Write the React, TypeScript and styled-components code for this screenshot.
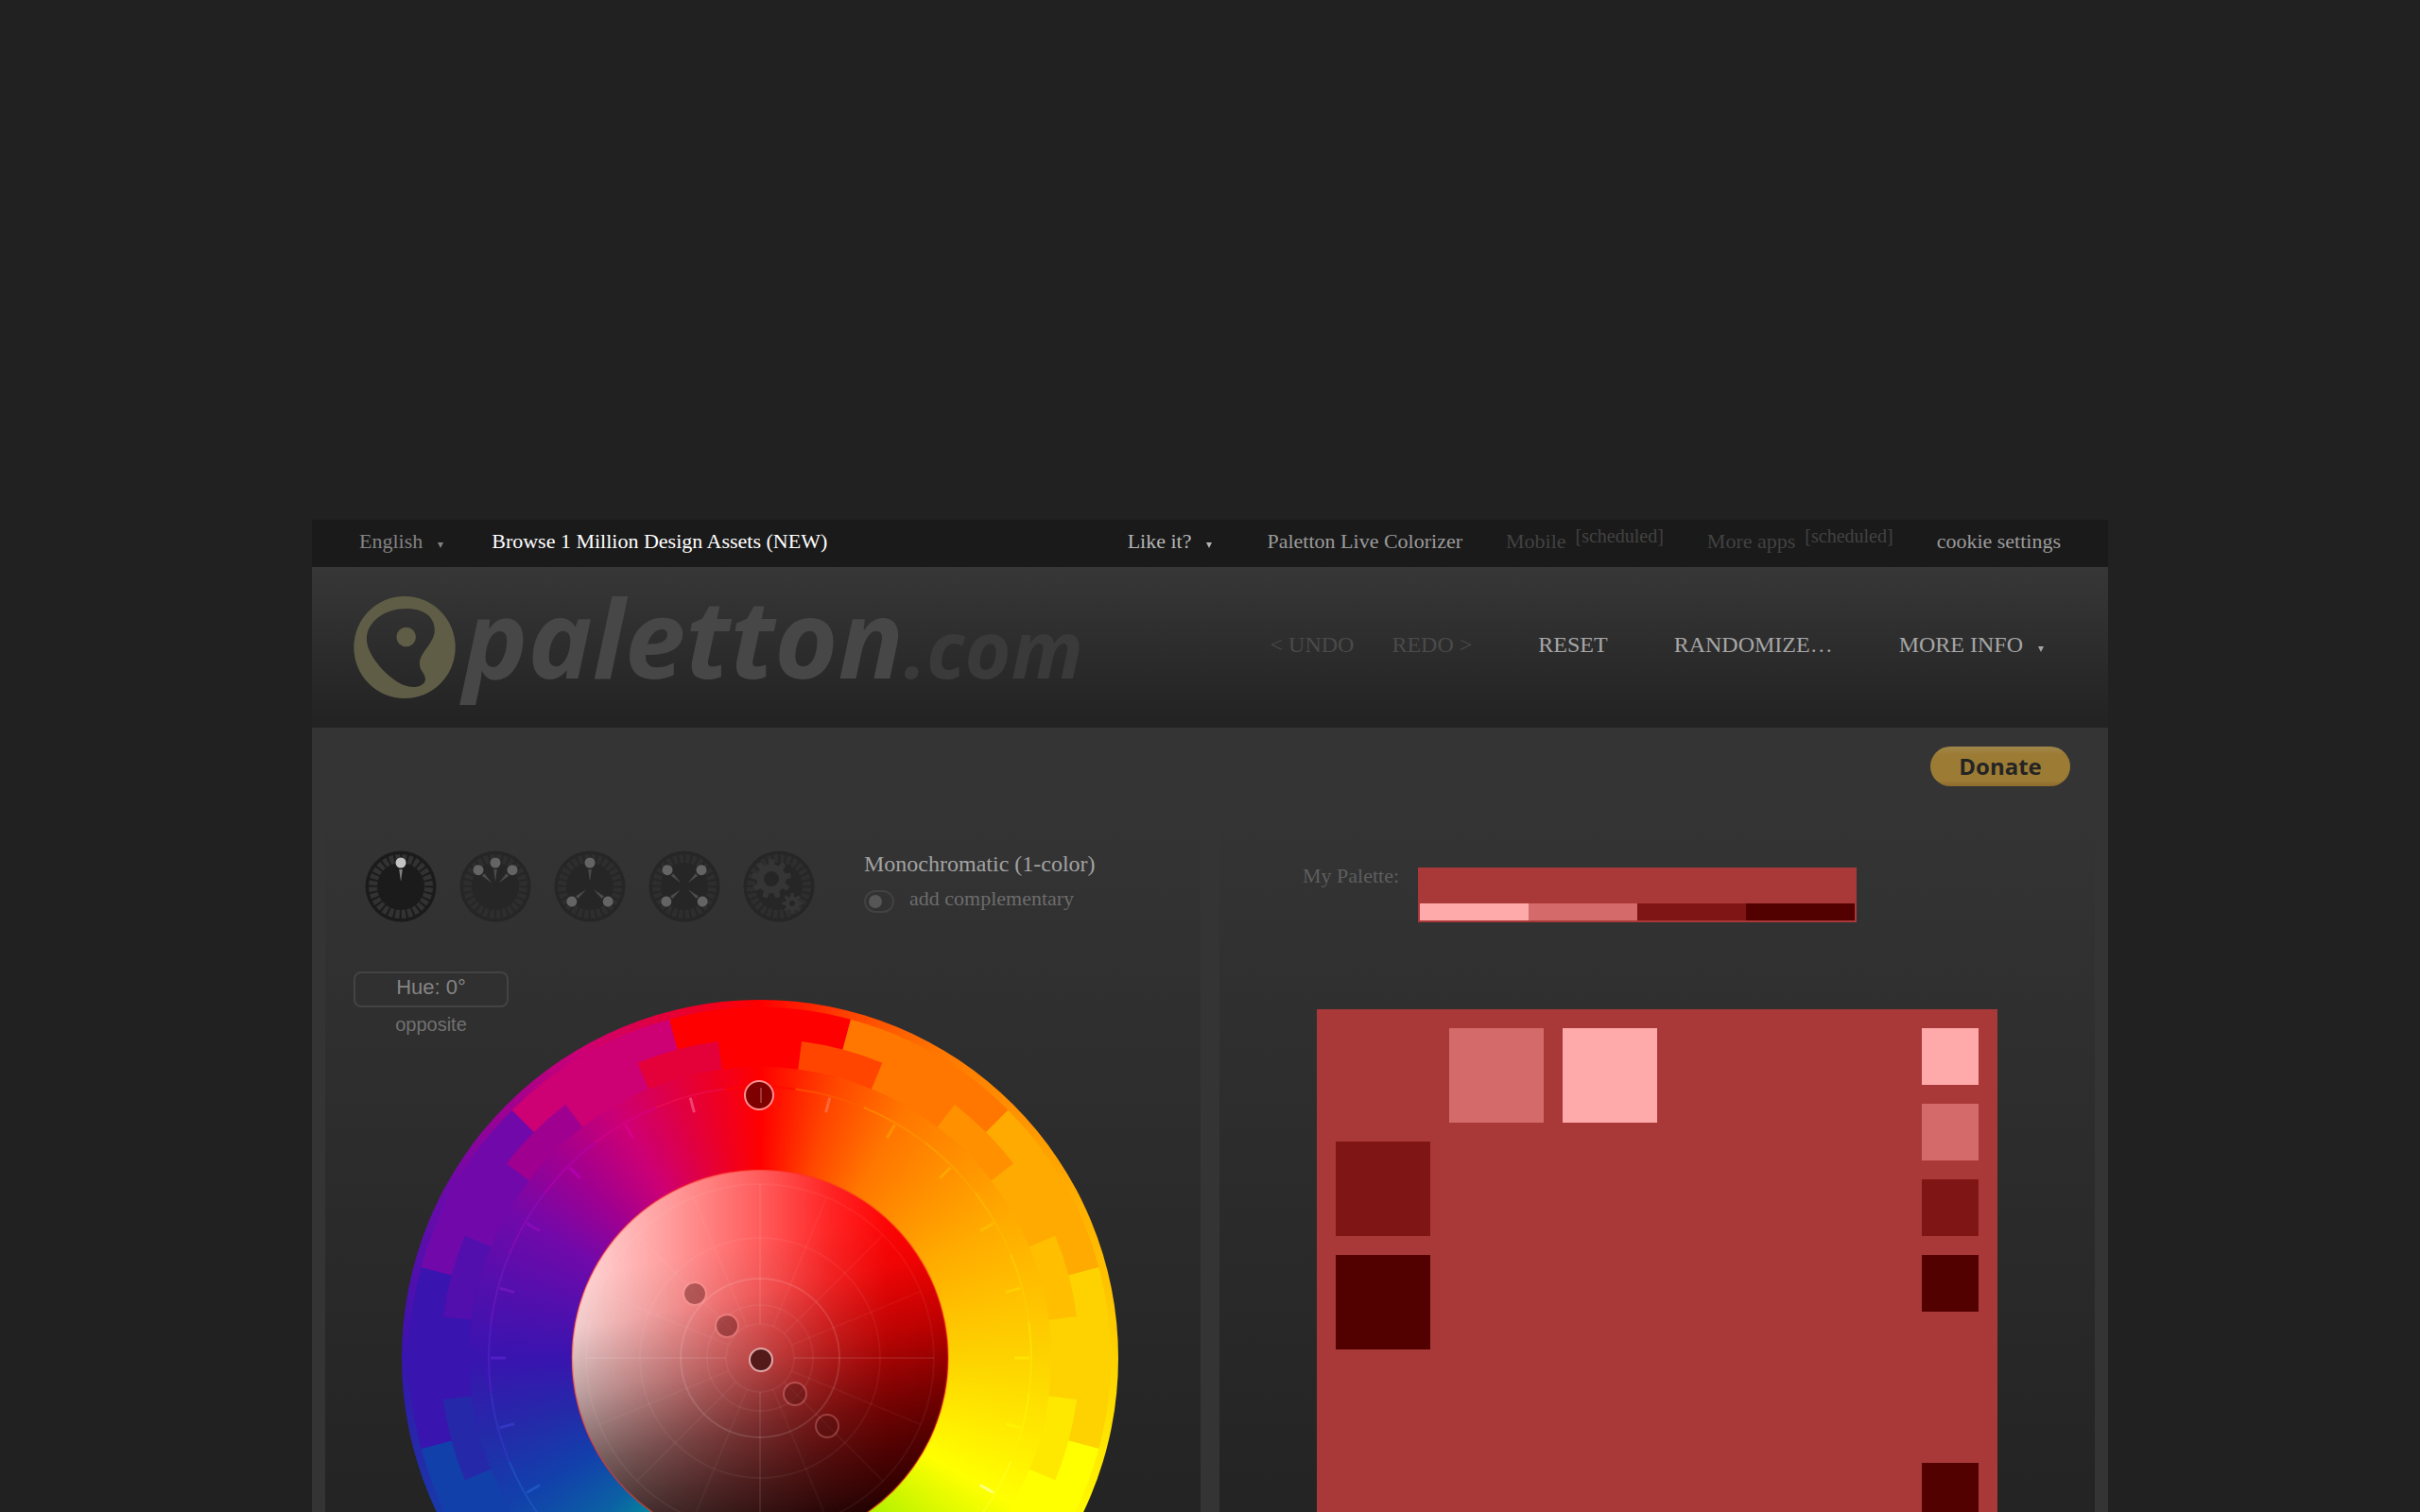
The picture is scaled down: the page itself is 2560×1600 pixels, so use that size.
import React from "react";
import styled, { createGlobalStyle, css } from "styled-components";

const serif = `"Liberation Serif", "Times New Roman", serif`;
const sans = `"Liberation Sans", Arial, sans-serif`;

const palette = {
  primary: "#a93939",
  lightest: "#ffaaaa",
  light: "#d46a6a",
  dark: "#801515",
  darkest: "#530000",
};

const GlobalStyle = createGlobalStyle`
  *, *::before, *::after { box-sizing: border-box; }
  body { margin: 0; background: #212121; font-family: ${serif}; }
`;

const Page = styled.div`
  height: 100vh;
  overflow: hidden;
  padding: 550px 40px 0;
`;

const Shell = styled.main`
  max-width: 1900px;
  margin: 0 auto;
  background: #343434;
`;

/* Top bar */

const TopBar = styled.nav`
  display: flex;
  justify-content: space-between;
  align-items: center;
  height: 50px;
  padding: 0 50px 4px;
  background: #1a1a1a;
`;

const LinkGroup = styled.div<{ $gap: number }>`
  display: flex;
  align-items: baseline;
  gap: ${(p) => p.$gap}px;
`;

const linkText = css<{ $color: string; $arrow?: boolean }>`
  color: ${(p) => p.$color};
  font-family: ${serif};
  text-decoration: none;
  white-space: nowrap;
  ${(p) =>
    p.$arrow &&
    css`
      &::after {
        content: "";
        display: inline-block;
        margin-left: 16px;
        border: solid transparent;
        border-width: 6px 3px 0;
        border-top-color: currentColor;
      }
    `}
`;

const TopLink = styled.a<{ $color: string; $arrow?: boolean }>`
  ${linkText}
  font-size: 22px;
  line-height: 26px;
  margin-right: ${(p) => (p.$arrow ? 12 : 0)}px;
`;

const Scheduled = styled.sup`
  margin-left: 10px;
  font-size: 20px;
  line-height: 0;
  vertical-align: 6px;
`;

/* Header */

const Header = styled.header`
  display: flex;
  justify-content: space-between;
  align-items: center;
  height: 170px;
  padding: 0 68px 0 44px;
  background: linear-gradient(#373737, #222222);
`;

const Logo = styled.a`
  display: flex;
  align-items: center;
  gap: 8px;
  text-decoration: none;
`;

const Wordmark = styled.span`
  padding-bottom: 10px;
  color: #474747;
  font: italic 700 115px/140px "Open Sans", "Noto Sans", sans-serif;
  white-space: nowrap;
`;

const Domain = styled.span`
  color: #3a3a3a;
  font-size: 84px;
`;

const Actions = styled.div`
  display: flex;
  align-items: baseline;
  gap: 70px;
  padding-bottom: 6px;
`;

const Action = styled.button<{ $color: string; $arrow?: boolean }>`
  ${linkText}
  padding: 0;
  border: 0;
  background: none;
  font-size: 24px;
  line-height: 28px;
`;

/* Body */

const DonateRow = styled.div`
  display: flex;
  justify-content: flex-end;
  height: 90px;
  padding: 20px 40px;
`;

const Donate = styled.button`
  width: 148px;
  height: 42px;
  padding: 0;
  border: 0;
  border-radius: 21px;
  background: linear-gradient(#a1874b, #9c7c35 20%, #9c7c35 85%, #8e6a2e);
  color: #242424;
  font: 700 24px/32px "Open Sans", sans-serif;
`;

const Panels = styled.div`
  display: grid;
  grid-template-columns: 1fr 1fr;
  gap: 20px;
  padding: 0 14px;
`;

const Panel = styled.section`
  min-height: 960px;
  background: linear-gradient(#343434, #242424 720px);
`;

const SchemeRow = styled.div`
  display: flex;
  gap: 52px;
  padding: 40px 0 0 42px;
`;

const SchemeList = styled.div`
  display: flex;
  gap: 24px;
`;

const SchemeButton = styled.button`
  padding: 0;
  border: 0;
  background: none;

  svg {
    display: block;
  }
`;

const SchemeInfo = styled.div`
  display: flex;
  flex-direction: column;
  gap: 10px;
`;

const SchemeName = styled.div`
  color: #a2a2a2;
  font-size: 24px;
  line-height: 28px;
`;

const ComplementLabel = styled.label`
  display: flex;
  gap: 16px;
  height: 28px;
  color: #6c6c6c;
  font-size: 22px;
  line-height: 26px;
`;

const Toggle = styled.input`
  appearance: none;
  align-self: flex-end;
  display: flex;
  align-items: center;
  width: 32px;
  height: 24px;
  margin: 0;
  padding: 0 3px;
  border: 2px solid #424242;
  border-radius: 12px;

  &::before {
    content: "";
    width: 14px;
    height: 14px;
    border-radius: 50%;
    background: #565656;
  }
`;

const WheelArea = styled.div`
  display: grid;
  padding: 52px 36px 0 30px;

  > * {
    grid-area: 1 / 1;
  }
`;

const HueControls = styled.div`
  display: flex;
  flex-direction: column;
  align-items: center;
  align-self: start;
  gap: 6px;
  width: 164px;
`;

const HueButton = styled.button`
  width: 100%;
  height: 38px;
  padding: 0 0 4px;
  border: 2px solid #434343;
  border-radius: 8px;
  background: #303030;
  color: #858585;
  font: 22px/26px ${sans};
`;

const OppositeButton = styled.button`
  padding: 0;
  border: 0;
  background: none;
  color: #717171;
  font: 20px/24px ${sans};
`;

const hues = [
  "#ff0000", "#ff4500", "#ff7600", "#ff9000", "#ffaa00", "#ffbf00",
  "#fdd200", "#ffe800", "#ffff00", "#ccf600", "#9fee00", "#67e300",
  "#00cc00", "#00af64", "#009999", "#0b61a4", "#1240ab", "#2529a9",
  "#3914af", "#530fad", "#7109aa", "#a00090", "#cd0074", "#e40038",
];

const Wheel = styled.div`
  justify-self: center;
  width: 758px;
  height: 758px;
  margin-top: 30px;
  border-radius: 50%;
  background: conic-gradient(${[...hues, hues[0]].join(", ")});

  svg {
    display: block;
  }
`;

const PaletteRow = styled.div`
  display: flex;
  gap: 20px;
  padding: 58px 0 0 88px;
`;

const PaletteLabel = styled.div`
  color: #5e5e5e;
  font-size: 22px;
  line-height: 18px;
`;

const MiniPalette = styled.div`
  display: grid;
  grid-template-columns: repeat(4, 1fr);
  align-items: end;
  width: 464px;
  height: 58px;
  padding: 2px;
  background: ${palette.primary};
`;

const MiniSwatch = styled.div<{ $fill: string }>`
  height: 18px;
  background: ${(p) => p.$fill};
`;

const Preview = styled.div`
  display: flex;
  justify-content: space-between;
  width: 720px;
  height: 720px;
  margin: 92px auto 0;
  padding: 20px;
  background: ${palette.primary};
`;

const SwatchGrid = styled.div`
  display: grid;
  grid-template-columns: repeat(3, 100px);
  grid-auto-rows: 100px;
  gap: 20px;
`;

const SwatchColumn = styled.div`
  display: flex;
  flex-direction: column;
  justify-content: space-between;
`;

const SwatchStack = styled.div`
  display: grid;
  gap: 20px;
`;

const Swatch = styled.button<{ $fill: string; $size: number; $column?: number }>`
  width: ${(p) => p.$size}px;
  height: ${(p) => p.$size}px;
  padding: 0;
  border: 0;
  background: ${(p) => p.$fill};
  grid-column: ${(p) => p.$column ?? "auto"};
`;

/* Drawings */

const polar = (r: number, deg: number) => {
  const a = (deg * Math.PI) / 180;
  return [r * Math.sin(a), -r * Math.cos(a)] as const;
};

const block = (r0: number, r1: number, from: number, to: number) => {
  const [ax, ay] = polar(r1, from);
  const [bx, by] = polar(r1, to);
  const [cx, cy] = polar(r0, to);
  const [dx, dy] = polar(r0, from);
  return `M${ax} ${ay}A${r1} ${r1} 0 0 1 ${bx} ${by}L${cx} ${cy}A${r0} ${r0} 0 0 0 ${dx} ${dy}Z`;
};

const arc = (r: number, from: number, to: number) => {
  const [ax, ay] = polar(r, from);
  const [bx, by] = polar(r, to);
  return `M${ax} ${ay}A${r} ${r} 0 0 1 ${bx} ${by}`;
};

const tickColors = [
  "#ff2020", "#ff6a40", "#ff9400", "#ffa800", "#ffbc00", "#ffd000",
  "#ffe600", "#fff200", "#ffff90", "#e0ff40", "#b8ff30", "#80f030",
  "#40e040", "#20c880", "#20b0b0", "#2080c0", "#2058c4", "#3438c4",
  "#5420c8", "#7018bc", "#8c0cb8", "#b400b0", "#d80088", "#f04878",
];

const ringOverrides: Record<number, string> = {
  0: "#ff0800",
  1: "#ff6000",
  8: "#ffff20",
  23: "#ec1050",
};

const ringColors = tickColors.map((c, i) => ringOverrides[i] ?? c);

const handles = [
  { x: -69, y: -68 },
  { x: -35, y: -34 },
  { x: 37, y: 38 },
  { x: 71, y: 72 },
];

function WheelDrawing() {
  return (
    <svg width="758" height="758" viewBox="-379 -379 758 758" role="img" aria-label="Color wheel">
      <defs>
        <linearGradient id="tint" x1="0" x2="1" y1="0" y2="0">
          <stop offset="0" stopColor="#fff" stopOpacity="0.86" />
          <stop offset="0.25" stopColor="#fff" stopOpacity="0.62" />
          <stop offset="0.5" stopColor="#fff" stopOpacity="0.36" />
          <stop offset="0.69" stopColor="#fff" stopOpacity="0.14" />
          <stop offset="0.84" stopColor="#fff" stopOpacity="0.02" />
          <stop offset="1" stopColor="#fff" stopOpacity="0" />
        </linearGradient>
        <linearGradient id="shade" x1="0.4" x2="0.6" y1="0" y2="1">
          <stop offset="0.2" stopColor="#000" stopOpacity="0" />
          <stop offset="0.33" stopColor="#000" stopOpacity="0.06" />
          <stop offset="0.5" stopColor="#000" stopOpacity="0.26" />
          <stop offset="0.68" stopColor="#000" stopOpacity="0.54" />
          <stop offset="0.8" stopColor="#000" stopOpacity="0.69" />
          <stop offset="0.9" stopColor="#000" stopOpacity="0.8" />
          <stop offset="1" stopColor="#000" stopOpacity="0.95" />
        </linearGradient>
      </defs>
      {hues.map((c, i) =>
        i % 2 === 0 ? <path key={i} d={block(308, 371, i * 15 - 15, i * 15 + 15)} fill={c} /> : null
      )}
      {hues.map((c, i) =>
        i % 2 === 1 ? <path key={i} d={block(308, 338, i * 15 - 7.5, i * 15 + 7.5)} fill={c} /> : null
      )}
      {ringColors.map((c, i) => (
        <path key={i} d={arc(287, i * 15 - 7.5, i * 15 + 7.5)} fill="none" stroke={c} strokeWidth="2" strokeOpacity="0.65" />
      ))}
      {tickColors.map((c, i) => {
        const [x1, y1] = polar(285, i * 15);
        const [x2, y2] = polar(269, i * 15);
        return <line key={i} x1={x1} y1={y1} x2={x2} y2={y2} stroke={c} strokeWidth="3" strokeOpacity="0.9" />;
      })}
      <circle r="199" fill="#f00" />
      <circle r="199" fill="url(#tint)" />
      <circle r="199" fill="url(#shade)" />
      <circle r="199" fill="none" stroke="#ff3020" strokeOpacity="0.4" strokeWidth="2" />
      <g fill="none" stroke="#fff" strokeWidth="2">
        {[36, 56, 84, 127, 184].map((r) => (
          <circle key={r} r={r} strokeOpacity={r === 84 ? 0.12 : 0.05} />
        ))}
        {Array.from({ length: 16 }, (_, i) => {
          const [x1, y1] = polar(36, i * 22.5);
          const [x2, y2] = polar(184, i * 22.5);
          return <line key={i} x1={x1} y1={y1} x2={x2} y2={y2} strokeOpacity={i % 4 ? 0.04 : 0.08} />;
        })}
      </g>
      {handles.map((h) => (
        <g key={h.x} opacity="0.4">
          <circle cx={h.x} cy={h.y} r="11" fill="#501010" />
          <circle cx={h.x} cy={h.y} r="12" fill="none" stroke="#ffb0b0" strokeOpacity="0.7" strokeWidth="2" />
        </g>
      ))}
      <circle cx="1" cy="2" r="12" fill="#541a1a" stroke="#e0a8a8" strokeWidth="2" />
      <circle cx="-1" cy="-278" r="15" fill="#7e0000" stroke="#ff9090" strokeWidth="2" />
      <line x1="1" x2="1" y1="-286" y2="-270" stroke="#a03838" strokeWidth="2" />
    </svg>
  );
}

const gear = (cx: number, cy: number, outer: number, inner: number, hole: number, teeth: number) => {
  const step = 360 / teeth;
  const pts: string[] = [];
  for (let i = 0; i < teeth; i++) {
    const a = i * step;
    [
      [inner, a - step * 0.3],
      [outer, a - step * 0.18],
      [outer, a + step * 0.18],
      [inner, a + step * 0.3],
    ].forEach(([r, d]) => {
      const [x, y] = polar(r, d);
      pts.push(`${cx + x} ${cy + y}`);
    });
  }
  return `M${pts.join("L")}ZM${cx - hole} ${cy}a${hole} ${hole} 0 1 0 ${hole * 2} 0a${hole} ${hole} 0 1 0 ${-hole * 2} 0Z`;
};

function SchemeIcon({ angles, active, gears }: { angles: number[]; active?: boolean; gears?: boolean }) {
  const tone = active ? "#c4c4c4" : "#646464";
  const base = active ? "#1b1b1b" : "#262626";
  return (
    <svg width="76" height="76" viewBox="-38 -38 76 76" aria-hidden="true">
      <circle r="37.5" fill={base} />
      <circle
        r="29.5"
        fill="none"
        stroke={active ? "#323232" : "#2e2e2e"}
        strokeWidth="9"
        pathLength="280"
        strokeDasharray="7 3"
        strokeDashoffset="-2"
      />
      {angles.map((a) => (
        <g key={a} transform={`rotate(${a})`}>
          <circle cy="-25" r="5.5" fill={tone} />
          <path d="M-1.8 -18H1.8L0 -5Z" fill={tone} fillOpacity="0.6" />
        </g>
      ))}
      {gears && (
        <g fill="#353535" fillRule="evenodd">
          <path d={gear(-8, -8, 21, 15.5, 8, 9)} />
          <path d={gear(14, 18, 11, 7.5, 3, 8)} />
        </g>
      )}
    </svg>
  );
}

const schemes = [
  { name: "Monochromatic", angles: [0], active: true },
  { name: "Adjacent colors", angles: [-46, 0, 46] },
  { name: "Triad", angles: [0, 130, -130] },
  { name: "Tetrad", angles: [-46, 46, 130, -130] },
  { name: "Free style", angles: [], gears: true },
];

export default function App() {
  return (
    <Page>
      <GlobalStyle />
      <Shell>
        <TopBar>
          <LinkGroup $gap={39}>
            <TopLink href="#language" $color="#828282" $arrow>English</TopLink>
            <TopLink href="#assets" $color="#ffffff">Browse 1 Million Design Assets (NEW)</TopLink>
          </LinkGroup>
          <LinkGroup $gap={46}>
            <TopLink href="#like" $color="#b4b4b4" $arrow>Like it?</TopLink>
            <TopLink href="#colorizer" $color="#9a9a9a">Paletton Live Colorizer</TopLink>
            <TopLink href="#mobile" $color="#424242">Mobile<Scheduled>[scheduled]</Scheduled></TopLink>
            <TopLink href="#apps" $color="#424242">More apps<Scheduled>[scheduled]</Scheduled></TopLink>
            <TopLink href="#cookies" $color="#9a9a9a">cookie settings</TopLink>
          </LinkGroup>
        </TopBar>
        <Header>
          <Logo href="#home">
            <svg width="108" height="108" viewBox="42 33 324 326" aria-hidden="true">
              <path
                fill="#605d46"
                fillRule="evenodd"
                d="M204 33A162 163 0 1 0 204 359A162 163 0 1 0 204 33ZM83 170C83 110 145 72 210 72C265 72 300 98 300 140C300 185 252 210 252 248C252 272 272 280 270 300C267 320 238 327 212 320C160 306 83 225 83 170Z"
              />
              <circle cx="209" cy="163" r="31" fill="#605d46" />
            </svg>
            <Wordmark>paletton<Domain>.com</Domain></Wordmark>
          </Logo>
          <Actions>
            <LinkGroup $gap={40}>
              <Action $color="#4a4a4a">&lt; UNDO</Action>
              <Action $color="#4a4a4a">REDO &gt;</Action>
            </LinkGroup>
            <Action $color="#a6a6a6">RESET</Action>
            <Action $color="#a6a6a6">RANDOMIZE…</Action>
            <Action $color="#a6a6a6" $arrow>MORE INFO</Action>
          </Actions>
        </Header>
        <DonateRow>
          <Donate>Donate</Donate>
        </DonateRow>
        <Panels>
          <Panel>
            <SchemeRow>
              <SchemeList>
                {schemes.map((s) => (
                  <SchemeButton key={s.name} aria-label={s.name}>
                    <SchemeIcon angles={s.angles} active={s.active} gears={s.gears} />
                  </SchemeButton>
                ))}
              </SchemeList>
              <SchemeInfo>
                <SchemeName>Monochromatic (1-color)</SchemeName>
                <ComplementLabel>
                  <Toggle type="checkbox" />
                  add complementary
                </ComplementLabel>
              </SchemeInfo>
            </SchemeRow>
            <WheelArea>
              <Wheel>
                <WheelDrawing />
              </Wheel>
              <HueControls>
                <HueButton>Hue: 0°</HueButton>
                <OppositeButton>opposite</OppositeButton>
              </HueControls>
            </WheelArea>
          </Panel>
          <Panel>
            <PaletteRow>
              <PaletteLabel>My Palette:</PaletteLabel>
              <MiniPalette>
                <MiniSwatch $fill={palette.lightest} />
                <MiniSwatch $fill={palette.light} />
                <MiniSwatch $fill={palette.dark} />
                <MiniSwatch $fill={palette.darkest} />
              </MiniPalette>
            </PaletteRow>
            <Preview>
              <SwatchGrid>
                <Swatch aria-label="Light" $fill={palette.light} $size={100} $column={2} />
                <Swatch aria-label="Lightest" $fill={palette.lightest} $size={100} />
                <Swatch aria-label="Dark" $fill={palette.dark} $size={100} $column={1} />
                <Swatch aria-label="Darkest" $fill={palette.darkest} $size={100} $column={1} />
              </SwatchGrid>
              <SwatchColumn>
                <SwatchStack>
                  <Swatch aria-label="Lightest" $fill={palette.lightest} $size={60} />
                  <Swatch aria-label="Light" $fill={palette.light} $size={60} />
                  <Swatch aria-label="Dark" $fill={palette.dark} $size={60} />
                  <Swatch aria-label="Darkest" $fill={palette.darkest} $size={60} />
                </SwatchStack>
                <SwatchStack>
                  <Swatch aria-label="Darkest" $fill={palette.darkest} $size={60} />
                  <Swatch aria-label="Dark" $fill={palette.dark} $size={60} />
                  <Swatch aria-label="Light" $fill={palette.light} $size={60} />
                </SwatchStack>
              </SwatchColumn>
            </Preview>
          </Panel>
        </Panels>
      </Shell>
    </Page>
  );
}
